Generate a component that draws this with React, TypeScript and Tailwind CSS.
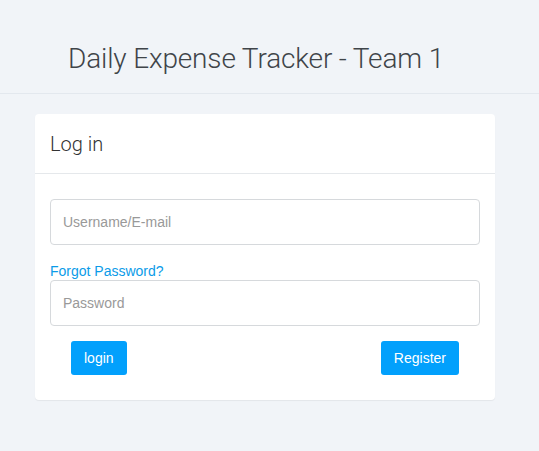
export default function App() {
  return (
    <div className="min-h-screen bg-[#f1f4f8] font-['Liberation_Sans',Arial,sans-serif]">
      <header className="h-[94px] border-b border-[#e3e8ee] flex items-center justify-center pt-[24px] pr-[27px]">
        <h1 className="text-[28px] font-light text-[#3f4449] font-['Roboto',sans-serif] tracking-[-0.15px]">
          Daily Expense Tracker - Team 1
        </h1>
      </header>
      <div className="px-[35px] pt-[20px] pb-10">
        <div className="w-[460px] bg-white rounded-[4px] shadow-[0_1px_1px_rgba(0,0,0,0.06)]">
          <div className="h-[60px] border-b border-[#e5e8eb] flex items-center px-[15px]">
            <h2 className="text-[20px] font-light text-[#333] font-['Roboto',sans-serif]">Log in</h2>
          </div>
          <div className="px-[15px] pt-[25px] pb-[25px]">
            <input
              type="text"
              placeholder="Username/E-mail"
              className="w-full h-[46px] border border-[#d6d9dc] rounded-[4px] px-[12px] text-[14px] text-[#333] placeholder:text-[#999] outline-none"
            />
            <a href="#" className="block mt-[17px] text-[14px] leading-[18px] text-[#0b9be8]">
              Forgot Password?
            </a>
            <input
              type="password"
              placeholder="Password"
              className="w-full h-[46px] mt-0 border border-[#d6d9dc] rounded-[4px] px-[12px] text-[14px] text-[#333] placeholder:text-[#999] outline-none"
            />
            <div className="flex justify-between px-[21px] mt-[15px]">
              <button className="h-[34px] px-[13px] rounded-[3px] bg-[#02a0fc] text-white text-[14px]">login</button>
              <button className="h-[34px] px-[13px] rounded-[3px] bg-[#02a0fc] text-white text-[14px]">Register</button>
            </div>
          </div>
        </div>
      </div>
    </div>
  );
}
